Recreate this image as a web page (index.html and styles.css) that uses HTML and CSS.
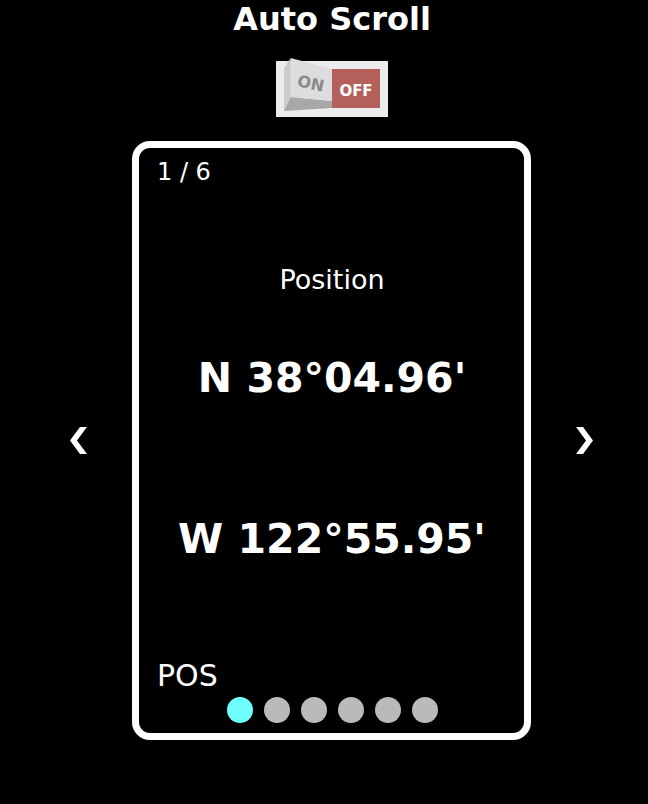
FILE: index.html
```html
<!DOCTYPE html>
<html>
<head>
<meta charset="utf-8">
<link rel="stylesheet" href="styles.css">
</head>
<body>
<div class="page">
  <header class="head">
    <h1 class="title">Auto Scroll</h1>
    <div class="switch-wrap">
      <svg class="switch" viewBox="0 0 112 56" width="112" height="56">
        <rect width="112" height="56" fill="#ececec"/>
        <rect x="56" y="8" width="48" height="39" fill="#b5605b"/>
        <polygon points="8,7 14.7,-3 14.7,36 8,50" fill="#cbcbcb"/>
        <polygon points="8,50 14.7,36 56,40 56,47" fill="#a8a8a8"/>
        <polygon points="14.7,-3 56,8 56,40 14.7,36" fill="#dddddd"/>
        <text class="sw-on" x="35" y="28" transform="rotate(12 35 22)">ON</text>
        <text class="sw-off" x="80" y="34.7">OFF</text>
      </svg>
    </div>
  </header>
  <div class="row">
    <svg class="arrow" viewBox="0 0 17 27" width="17" height="27">
      <polygon points="10,0 17,0 7,13.5 17,27 10,27 0,13.5" fill="#fff"/>
    </svg>
    <section class="card">
      <div class="counter">1 / 6</div>
      <div class="label">Position</div>
      <div class="value v1">N 38°04.96'</div>
      <div class="value v2">W 122°55.95'</div>
      <div class="code">POS</div>
      <div class="dots">
        <span class="dot active"></span>
        <span class="dot"></span>
        <span class="dot"></span>
        <span class="dot"></span>
        <span class="dot"></span>
        <span class="dot"></span>
      </div>
    </section>
    <svg class="arrow" viewBox="0 0 17 27" width="17" height="27">
      <polygon points="0,0 7,0 17,13.5 7,27 0,27 10,13.5" fill="#fff"/>
    </svg>
  </div>
</div>
</body>
</html>
```

FILE: styles.css
```css
html, body {
  margin: 0;
  padding: 0;
  background: #000;
}
body {
  font-family: "DejaVu Sans", Verdana, sans-serif;
  color: #fff;
  width: 648px;
  height: 804px;
  overflow: hidden;
}
.page {
  display: flex;
  flex-direction: column;
}
.head {
  padding-left: 16px;
  display: flex;
  flex-direction: column;
  align-items: center;
}
.title {
  margin: 0;
  font-size: 32px;
  line-height: 38px;
  font-weight: bold;
}
.switch-wrap {
  margin-top: 23px;
  height: 56px;
}
.switch {
  display: block;
  overflow: visible;
}
.sw-on {
  font-family: "DejaVu Sans", Verdana, sans-serif;
  font-weight: bold;
  font-size: 16px;
  fill: #8a8a8a;
  text-anchor: middle;
}
.sw-off {
  font-family: "DejaVu Sans", Verdana, sans-serif;
  font-weight: bold;
  font-size: 15px;
  fill: #ffffff;
  text-anchor: middle;
}
.row {
  margin-top: 24px;
  display: flex;
  align-items: center;
  padding-left: 70px;
}
.arrow {
  display: block;
  flex: none;
}
.card {
  box-sizing: border-box;
  width: 399px;
  height: 599px;
  margin: 0 45px 0 45px;
  border: 7px solid #fff;
  border-radius: 18px;
  padding: 10px 17px 10px 18px;
  display: flex;
  flex-direction: column;
}
.counter {
  font-size: 24px;
  line-height: 28px;
}
.label {
  margin-top: 78px;
  font-size: 27px;
  line-height: 32px;
  text-align: center;
}
.value {
  font-size: 41px;
  line-height: 48px;
  font-weight: bold;
  text-align: center;
  white-space: nowrap;
}
.v1 { margin-top: 58px; }
.v2 { margin-top: 113px; }
.code {
  margin-top: 95px;
  font-size: 30px;
  line-height: 36px;
}
.dots {
  margin-top: 3px;
  display: flex;
  justify-content: center;
  gap: 11px;
}
.dot {
  width: 26px;
  height: 26px;
  border-radius: 50%;
  background: #bababa;
}
.dot.active {
  background: #70fdfd;
}
```
